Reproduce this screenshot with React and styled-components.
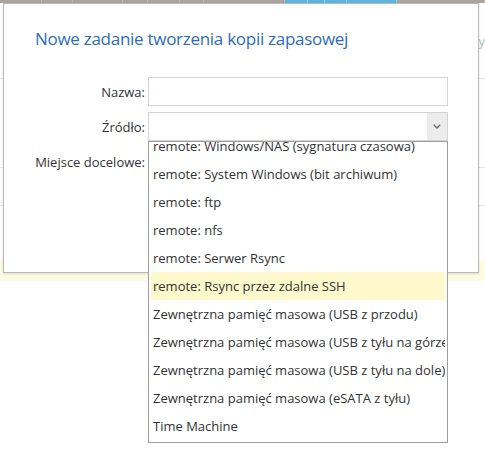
import React, { useLayoutEffect, useRef } from "react";
import styled, { createGlobalStyle } from "styled-components";

const Global = createGlobalStyle`
  html, body { margin: 0; padding: 0; background: #ffffff; }
  body { font-family: "Open Sans", "Noto Sans", sans-serif; }
  * { box-sizing: border-box; }
`;

const Page = styled.div`
  position: relative;
  width: 485px;
  height: 465px;
  overflow: hidden;
  background: #ffffff;
`;

const TopBar = styled.div`
  display: flex;
  height: 3px;
  background: #a9a49d;
`;

const TopSegment = styled.div`
  width: ${(p) => p.$w}px;
  background: ${(p) => (p.$active ? "#5cb6e3" : "#a9a49d")};
  border-right: 1px solid ${(p) => (p.$active ? "#8fcdee" : "#bdb8b1")};
`;

const BgRow = styled.div`
  height: ${(p) => p.$h}px;
  border-bottom: 1px solid ${(p) => (p.$line ? "#e4e4e4" : "transparent")};
  background: ${(p) => (p.$yellow ? "#fefbe3" : "transparent")};
  display: flex;
  justify-content: flex-end;
  align-items: center;
  font-size: 13px;
  color: #b8b8b8;
`;

const Modal = styled.div`
  position: absolute;
  left: 3px;
  top: 3px;
  width: 476px;
  height: 270px;
  background: #ffffff;
  border: 1px solid #b9b9b9;
  box-shadow: 0 1px 2px rgba(0, 0, 0, 0.12);
  display: flex;
  flex-direction: column;
`;

const Title = styled.h2`
  margin: 0;
  padding: 23px 0 0 31px;
  font-size: 17px;
  line-height: 24px;
  font-weight: 400;
  color: #2c6cc2;
  letter-spacing: -0.28px;
`;

const Form = styled.div`
  margin-top: 26px;
  display: grid;
  grid-template-columns: 141px 300px;
  column-gap: 3px;
  row-gap: 6px;
  grid-auto-rows: 29px;
`;

const Label = styled.div`
  display: flex;
  align-items: center;
  justify-content: flex-end;
  font-size: 13px;
  color: #333333;
  white-space: nowrap;
`;

const TextInput = styled.div`
  border: 1px solid #d4d4d4;
  background: #ffffff;
`;

const SelectBox = styled.div`
  position: relative;
  display: flex;
  justify-content: flex-end;
  border: 1px solid #d4d4d4;
  background: #ffffff;
`;

const Arrow = styled.div`
  width: 20px;
  background: #ececec;
  display: flex;
  align-items: center;
  justify-content: center;
`;

const Dropdown = styled.div`
  position: absolute;
  left: -1px;
  top: 28px;
  width: 300px;
  height: 302px;
  border: 1px solid #9e9e9e;
  background: #ffffff;
  overflow: hidden;
  z-index: 5;
`;

const ListInner = styled.div`
  padding: 0 2px 2px 2px;
`;

const Option = styled.div`
  height: 28px;
  display: flex;
  align-items: center;
  padding-left: 2px;
  font-size: 13px;
  color: #333333;
  white-space: nowrap;
  overflow: hidden;
  background: ${(p) => (p.$active ? "#fdf9cc" : "transparent")};
`;

const options = [
  "remote: Windows/NAS (sygnatura czasowa)",
  "remote: System Windows (bit archiwum)",
  "remote: ftp",
  "remote: nfs",
  "remote: Serwer Rsync",
  "remote: Rsync przez zdalne SSH",
  "Zewnętrzna pamięć masowa (USB z przodu)",
  "Zewnętrzna pamięć masowa (USB z tyłu na górze)",
  "Zewnętrzna pamięć masowa (USB z tyłu na dole)",
  "Zewnętrzna pamięć masowa (eSATA z tyłu)",
  "Time Machine",
];

const segments = [
  { w: 42 }, { w: 31 }, { w: 50 }, { w: 25 }, { w: 32 }, { w: 24 }, { w: 81 },
  { w: 23, a: true }, { w: 17, a: true }, { w: 22, a: true }, { w: 50, a: true },
  { w: 88 },
];

export default function App() {
  const listRef = useRef(null);
  useLayoutEffect(() => {
    if (listRef.current) listRef.current.scrollTop = 10;
  }, []);

  return (
    <>
      <Global />
      <Page>
        <TopBar>
          {segments.map((s, i) => (
            <TopSegment key={i} $w={s.w} $active={s.a} />
          ))}
        </TopBar>
        <BgRow $h={76} $line>y</BgRow>
        <BgRow $h={89} $line />
        <BgRow $h={38} $line />
        <BgRow $h={54} />
        <BgRow $h={21} $yellow />

        <Modal>
          <Title>Nowe zadanie tworzenia kopii zapasowej</Title>
          <Form>
            <Label>Nazwa:</Label>
            <TextInput />
            <Label>Źródło:</Label>
            <SelectBox>
              <Arrow>
                <svg width="8" height="5" viewBox="0 0 8 5">
                  <path d="M0.8 0.8 L4 4 L7.2 0.8" fill="none" stroke="#6a6a6a" strokeWidth="1.3" />
                </svg>
              </Arrow>
              <Dropdown ref={listRef}>
                <ListInner>
                  {options.map((o, i) => (
                    <Option key={i} $active={i === 5}>{o}</Option>
                  ))}
                </ListInner>
              </Dropdown>
            </SelectBox>
            <Label>Miejsce docelowe:</Label>
            <TextInput />
          </Form>
        </Modal>
      </Page>
    </>
  );
}
